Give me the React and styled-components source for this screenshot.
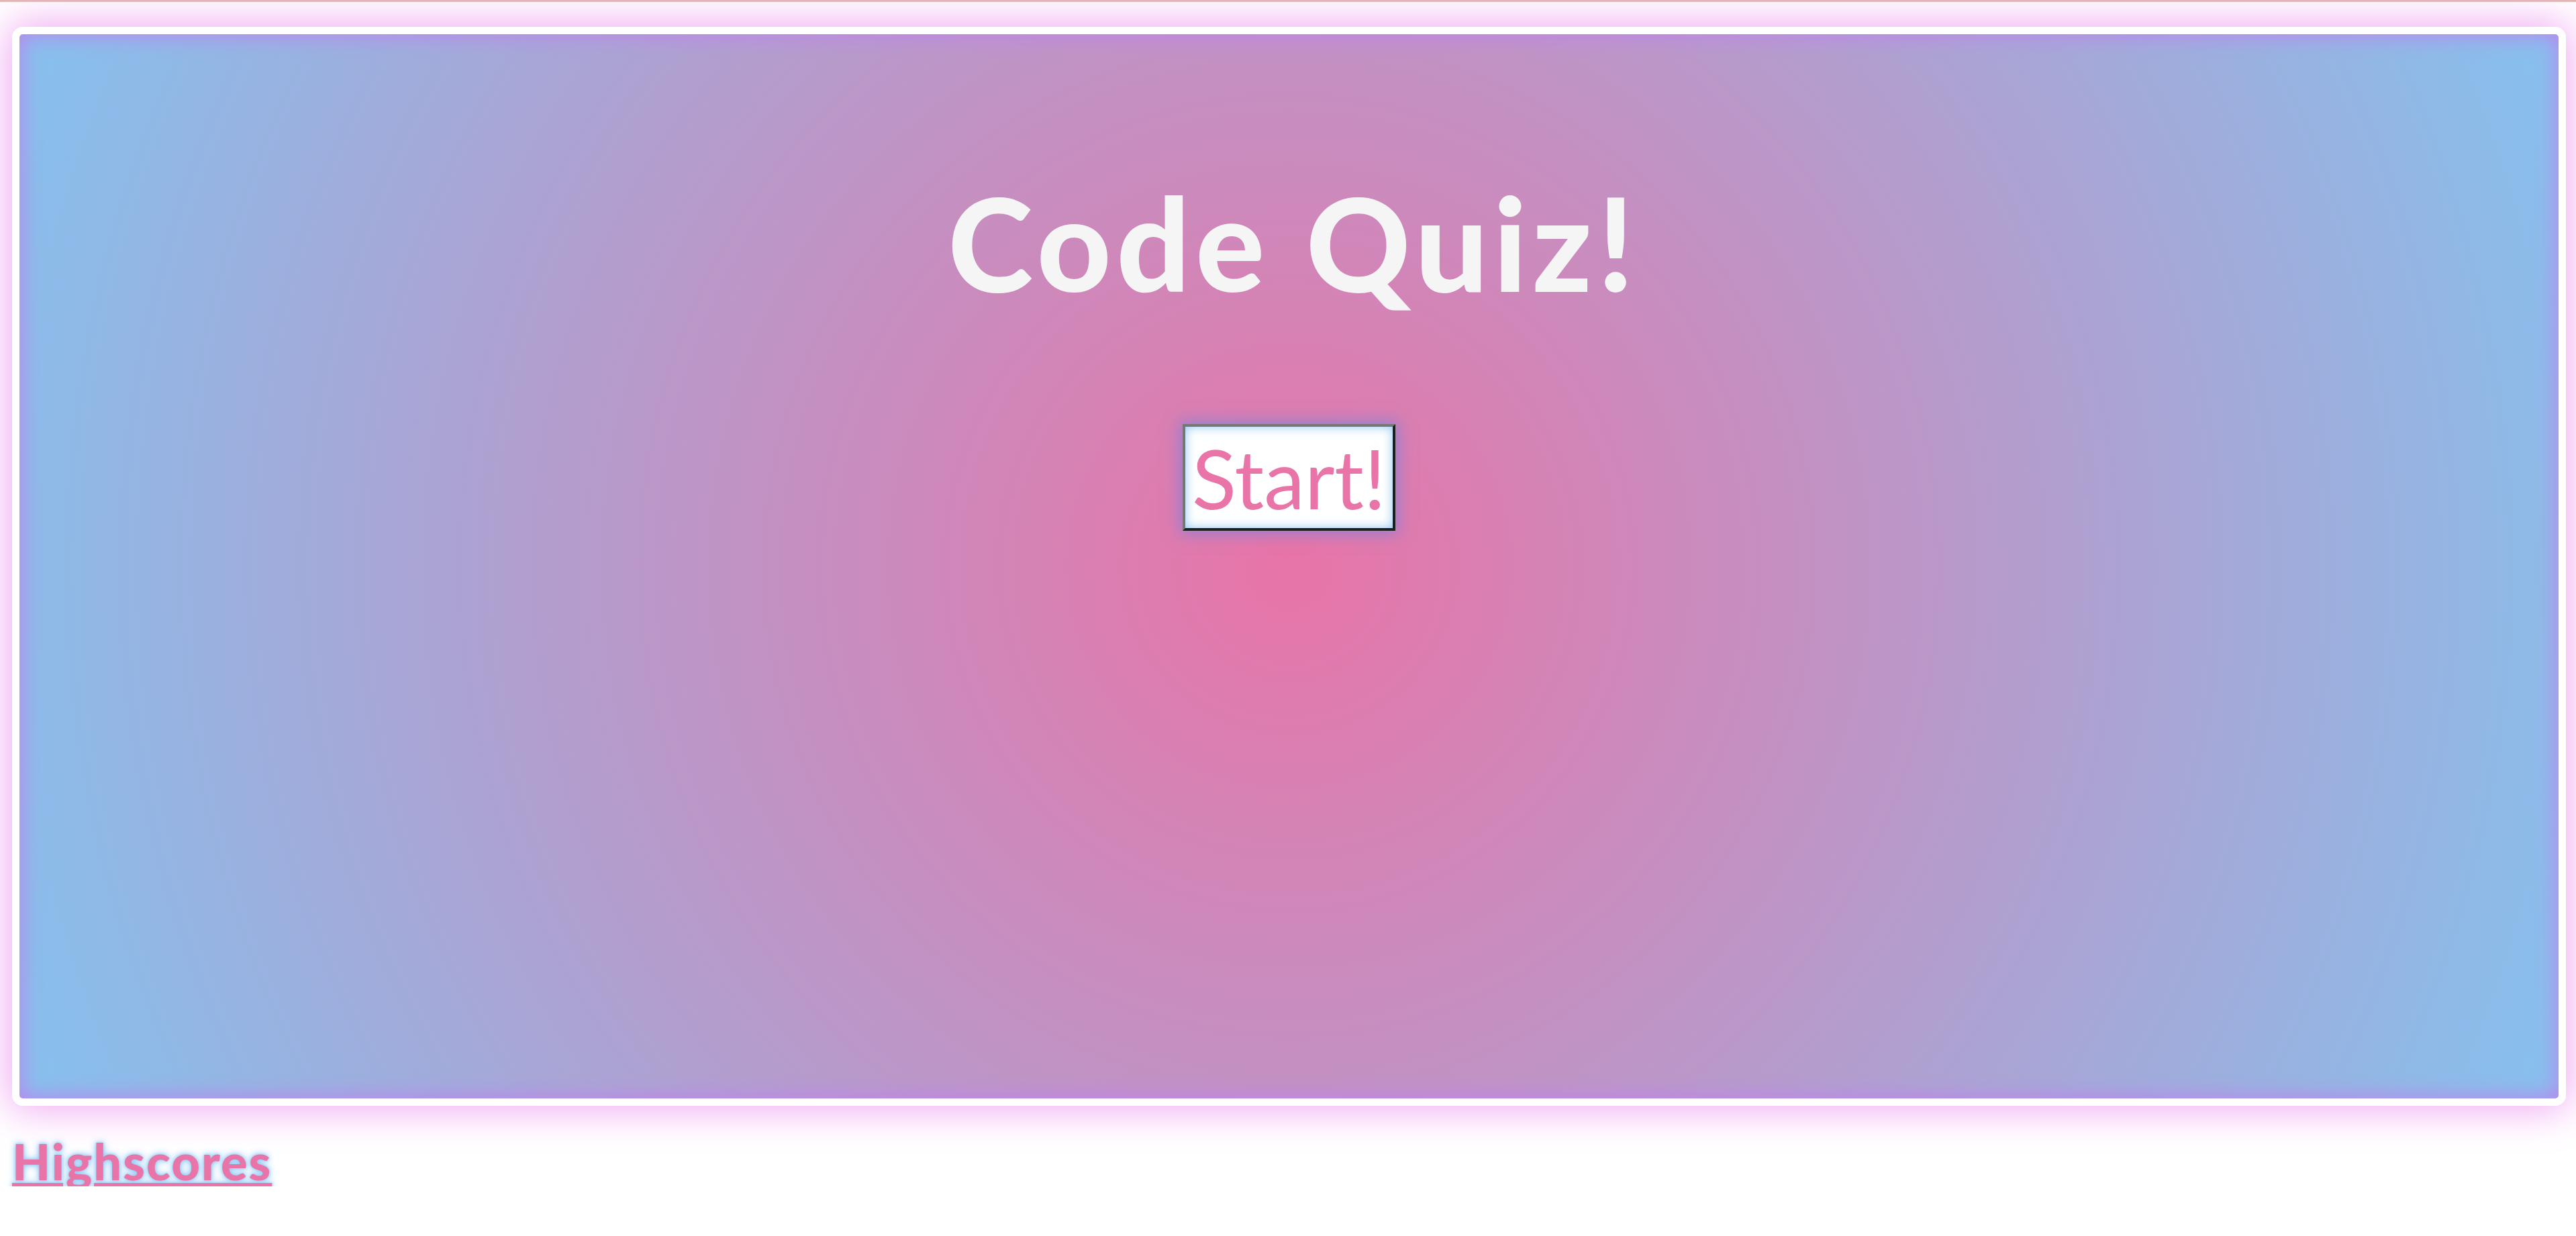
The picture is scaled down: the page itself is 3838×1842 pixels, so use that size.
import React from 'react';
import styled, { createGlobalStyle } from 'styled-components';

const colors = {
  pink: '#e874a8',
  blue: '#85c1ee',
  glow: '#f0a8f2',
  purple: '#c080f0',
  title: '#f5f5f5',
};

const GlobalStyle = createGlobalStyle`
  html, body {
    margin: 0;
    padding: 0;
    background: #ffffff;
  }
  body {
    font-family: 'Lato', 'Open Sans', sans-serif;
  }
`;

const App = () => {
  return (
    <>
      <GlobalStyle />
      <TopStrip />
      <Page>
        <Card>
          <Title>Code Quiz!</Title>
          <StartButton type="button">Start!</StartButton>
        </Card>
        <HighscoresLink href="#highscores">Highscores</HighscoresLink>
      </Page>
    </>
  );
};

export default App;

const TopStrip = styled.div`
  height: 3px;
  background: linear-gradient(#d9b2a9, #e6c4bd);
`;

const Page = styled.main`
  display: flex;
  flex-direction: column;
  align-items: flex-start;
  padding: 37px 15px 0 18px;
`;

const Card = styled.section`
  box-sizing: border-box;
  width: 100%;
  height: 1608px;
  display: flex;
  flex-direction: column;
  align-items: center;
  padding-top: 214px;
  border: 11px solid #ffffff;
  border-radius: 16px;
  background: radial-gradient(circle at center, ${colors.pink} 0%, ${colors.blue} 100%);
  box-shadow: 0 0 60px 6px ${colors.glow}, inset 0 0 34px ${colors.purple};
`;

const Title = styled.h1`
  margin: 0;
  padding-left: 14px;
  font-family: 'Lato', sans-serif;
  font-weight: 900;
  font-size: 192px;
  line-height: 1;
  letter-spacing: 8px;
  color: ${colors.title};
`;

const StartButton = styled.button`
  margin-top: 175px;
  box-sizing: border-box;
  width: 317px;
  height: 159px;
  padding: 14px 10px;
  font-family: 'Lato', sans-serif;
  font-weight: 400;
  font-size: 122px;
  line-height: 1;
  color: ${colors.pink};
  background: #ffffff;
  border: 4px solid;
  border-color: #767676 #1e1e1e #1e1e1e #767676;
  box-shadow: 0 0 22px 4px rgba(120, 130, 220, 0.75), inset 0 0 16px #8cc6f0;
  cursor: pointer;
`;

const HighscoresLink = styled.a`
  margin-top: 46px;
  font-family: 'Lato', sans-serif;
  font-weight: 900;
  font-size: 74px;
  line-height: 1;
  letter-spacing: 2px;
  color: ${colors.pink};
  text-decoration: underline;
  text-decoration-thickness: 6px;
  text-underline-offset: 4px;
  text-shadow: 0 0 4px #8cc8f4, 0 0 12px #7fc0f2;
`;
